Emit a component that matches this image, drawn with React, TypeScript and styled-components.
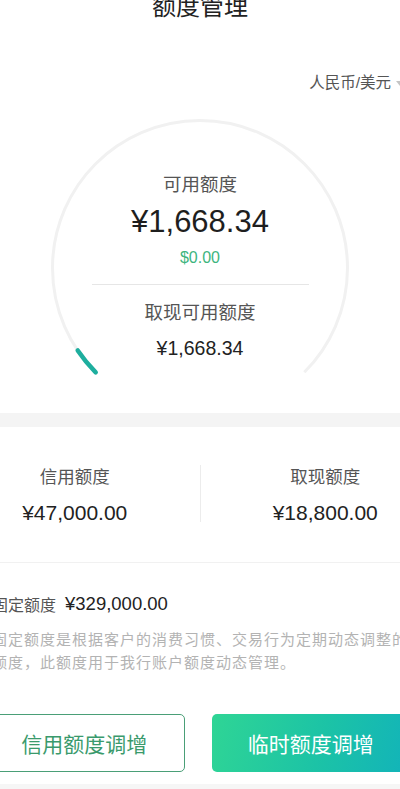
import { createGlobalStyle, styled } from "styled-components"

const GlobalStyle = createGlobalStyle`
  html, body {
    margin: 0;
    padding: 0;
    background: #ffffff;
  }
  body {
    font-family: "Liberation Sans", "Noto Sans CJK SC", sans-serif;
    overflow-x: hidden;
  }
`

const RADIUS = 147.5
const CX = 150
const CY = 150

function point(deg: number) {
  const rad = (deg * Math.PI) / 180
  return [CX + RADIUS * Math.cos(rad), CY + RADIUS * Math.sin(rad)]
}

function arcPath(from: number, to: number) {
  const [x1, y1] = point(from)
  const [x2, y2] = point(to)
  const large = to - from > 180 ? 1 : 0
  return `M ${x1} ${y1} A ${RADIUS} ${RADIUS} 0 ${large} 1 ${x2} ${y2}`
}

function Gauge() {
  return (
    <GaugeSvg width="300" height="260" viewBox="0 0 300 260">
      <path d={arcPath(135, 405)} fill="none" stroke="#f1f1f1" strokeWidth="3" />
      <path d={arcPath(135, 146)} fill="none" stroke="#1eae9e" strokeWidth="4.5" strokeLinecap="round" />
    </GaugeSvg>
  )
}

export default function App() {
  return (
    <Viewport>
      <GlobalStyle />
      <Page>
        <Title>额度管理</Title>

        <CurrencyRow>
          <span>人民币/美元</span>
          <svg width="8" height="5" viewBox="0 0 8 5">
            <path d="M0 0 L8 0 L4 5 Z" fill="#c4c4c4" />
          </svg>
        </CurrencyRow>

        <GaugeWrap>
          <Gauge />
          <GaugeLabel>可用额度</GaugeLabel>
          <BigAmount>¥1,668.34</BigAmount>
          <UsdAmount>$0.00</UsdAmount>
          <GaugeDivider />
          <GaugeLabel $gap={15}>取现可用额度</GaugeLabel>
          <SmallAmount>¥1,668.34</SmallAmount>
        </GaugeWrap>

        <Band />

        <Stats>
          <StatCol>
            <StatLabel>信用额度</StatLabel>
            <StatValue>¥47,000.00</StatValue>
          </StatCol>
          <StatDivider />
          <StatCol>
            <StatLabel>取现额度</StatLabel>
            <StatValue>¥18,800.00</StatValue>
          </StatCol>
        </Stats>

        <FixedSection>
          <FixedRow>
            <FixedLabel>固定额度</FixedLabel>
            <FixedValue>¥329,000.00</FixedValue>
          </FixedRow>
          <Description>
            固定额度是根据客户的消费习惯、交易行为定期动态调整的额度，此额度用于我行账户额度动态管理。
          </Description>
        </FixedSection>

        <ButtonRow>
          <Button>信用额度调增</Button>
          <Button $primary>临时额度调增</Button>
        </ButtonRow>

        <Footer />
      </Page>
    </Viewport>
  )
}

const Viewport = styled.div`
  width: 400px;
  height: 789px;
  overflow: hidden;
`

const Page = styled.div`
  width: 500px;
  margin-left: -50px;
  display: flex;
  flex-direction: column;
`

const Title = styled.div`
  margin-top: -5px;
  height: 24px;
  line-height: 24px;
  font-size: 24px;
  text-align: center;
  color: #222;
`

const CurrencyRow = styled.div`
  margin-top: 54px;
  height: 20px;
  display: flex;
  align-items: center;
  justify-content: flex-end;
  gap: 5px;
  padding-right: 46px;
  font-size: 15.5px;
  line-height: 20px;
  color: #555;
`

const GaugeWrap = styled.div`
  position: relative;
  width: 300px;
  height: 295px;
  margin: 25px auto 0;
  display: flex;
  flex-direction: column;
  align-items: center;
  padding-top: 54px;
  box-sizing: border-box;
`

const GaugeSvg = styled.svg`
  position: absolute;
  left: 0;
  top: 0;
`

const GaugeLabel = styled.div<{ $gap?: number }>`
  position: relative;
  margin-top: ${(p) => p.$gap ?? 0}px;
  font-size: 18.5px;
  line-height: 26px;
  color: #555;
`

const BigAmount = styled.div`
  position: relative;
  margin-top: 6px;
  font-size: 31px;
  line-height: 36px;
  color: #1e1e1e;
`

const UsdAmount = styled.div`
  position: relative;
  margin-top: 8px;
  font-size: 16px;
  line-height: 20px;
  color: #3db57e;
`

const GaugeDivider = styled.div`
  position: relative;
  margin-top: 16px;
  width: 217px;
  height: 1px;
  background: #e6e6e6;
`

const SmallAmount = styled.div`
  position: relative;
  margin-top: 10px;
  font-size: 19.5px;
  line-height: 24px;
  color: #222;
`

const Band = styled.div`
  height: 14px;
  background: #f4f4f4;
`

const Stats = styled.div`
  display: grid;
  grid-template-columns: 1fr 1px 1fr;
  padding: 38px 0 35px;
  border-bottom: 1px solid #f1f1f1;
`

const StatCol = styled.div`
  display: flex;
  flex-direction: column;
  align-items: center;
  gap: 10px;
`

const StatDivider = styled.div`
  height: 57px;
  background: #ececec;
`

const StatLabel = styled.div`
  font-size: 17.5px;
  line-height: 24px;
  color: #555;
`

const StatValue = styled.div`
  font-size: 21px;
  line-height: 28px;
  color: #222;
`

const FixedSection = styled.div`
  padding: 29px 40px 0 42px;
  display: flex;
  flex-direction: column;
  gap: 12px;
`

const FixedRow = styled.div`
  display: flex;
  align-items: center;
  gap: 9px;
  height: 24px;
`

const FixedLabel = styled.span`
  font-size: 16px;
  color: #555;
`

const FixedValue = styled.span`
  font-size: 18.5px;
  color: #222;
`

const Description = styled.p`
  margin: 0;
  font-size: 15px;
  letter-spacing: 1px;
  line-height: 23px;
  color: #b3b3b3;
`

const ButtonRow = styled.div`
  display: flex;
  gap: 27px;
  padding: 0 40px 0 34px;
  margin-top: 40px;
`

const Button = styled.div<{ $primary?: boolean }>`
  flex: 1;
  height: 58px;
  box-sizing: border-box;
  display: flex;
  align-items: center;
  justify-content: center;
  border-radius: 5px;
  font-size: 21px;
  color: ${(p) => (p.$primary ? "#ffffff" : "#3a9a6c")};
  border: ${(p) => (p.$primary ? "none" : "1.5px solid #4a9f77")};
  background: ${(p) =>
    p.$primary ? "linear-gradient(105deg, #2fd595 0%, #1cc3a6 55%, #12b3ba 100%)" : "#ffffff"};
`

const Footer = styled.div`
  margin-top: 12px;
  height: 20px;
  background: #f6f6f6;
`
